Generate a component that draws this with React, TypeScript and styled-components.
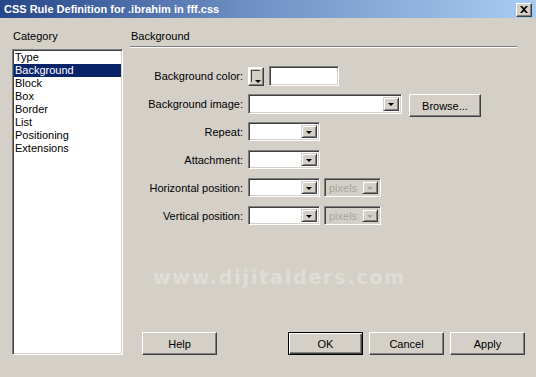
import styled, { createGlobalStyle } from "styled-components";

const GlobalStyle = createGlobalStyle`
  body {
    margin: 0;
    background: #d4d0c8;
    font-family: "Liberation Sans", Arial, sans-serif;
    font-size: 11px;
    color: #000;
  }
`;

const Window = styled.div`
  width: 536px;
  height: 377px;
  display: flex;
  flex-direction: column;
  background: #d4d0c8;
  overflow: hidden;
`;

const TitleBar = styled.div`
  height: 18px;
  display: flex;
  align-items: center;
  justify-content: space-between;
  padding: 0 4px 0 4px;
  background: linear-gradient(to right, #26468a 0%, #6d8ec2 45%, #a8ccf2 100%);
`;

const Title = styled.span`
  color: #fff;
  font-weight: bold;
  font-size: 11px;
`;

const CloseButton = styled.div`
  width: 14px;
  height: 12px;
  display: flex;
  align-items: center;
  justify-content: center;
  background: #d4d0c8;
  border: 1px solid;
  border-color: #fff #404040 #404040 #fff;
  box-shadow: inset -1px -1px #808080;
  margin-top: 1px;
`;

const Main = styled.div`
  flex: 1;
  display: flex;
  gap: 7px;
  padding: 12px 11px 22px 12px;
`;

const Sidebar = styled.div`
  width: 111px;
  display: flex;
  flex-direction: column;
`;

const Caption = styled.div`
  height: 13px;
  line-height: 13px;
  padding-left: 1px;
`;

const ListBox = styled.div`
  flex: 1;
  margin-top: 6px;
  background: #fff;
  border: 1px solid;
  border-color: #808080 #fff #fff #808080;
  box-shadow: inset 1px 1px #404040, inset -1px -1px #d4d0c8;
  padding: 1px;
`;

const ListItem = styled.div<{ $selected?: boolean }>`
  height: 13px;
  line-height: 13px;
  padding-left: 1px;
  background: ${(p) => (p.$selected ? "#0a246a" : "transparent")};
  color: ${(p) => (p.$selected ? "#fff" : "#000")};
`;

const Panel = styled.div`
  flex: 1;
  display: flex;
  flex-direction: column;
`;

const Rule = styled.div`
  margin: 3px 8px 0 0;
  height: 0;
  border-top: 1px solid #808080;
  border-bottom: 1px solid #fff;
`;

const Form = styled.div`
  margin-top: 18px;
  display: grid;
  grid-template-columns: 113px auto;
  grid-auto-rows: 20px;
  column-gap: 5px;
  row-gap: 8px;
`;

const Label = styled.div`
  text-align: right;
  align-self: center;
  white-space: nowrap;
`;

const Controls = styled.div<{ $gap?: number }>`
  display: flex;
  align-items: flex-start;
  gap: ${(p) => p.$gap ?? 4}px;
`;

const sunken = `
  border: 1px solid;
  border-color: #808080 #fff #fff #808080;
  box-shadow: inset 1px 1px #404040, inset -1px -1px #d4d0c8;
`;

const TextInput = styled.div<{ $width: number }>`
  box-sizing: border-box;
  width: ${(p) => p.$width}px;
  height: 20px;
  background: #fff;
  ${sunken}
`;

const Swatch = styled.div`
  position: relative;
  box-sizing: border-box;
  width: 16px;
  height: 19px;
  margin-top: 1px;
  background: #d4d0c8;
  border: 1px solid;
  border-color: #fff #404040 #404040 #fff;
  box-shadow: inset -1px -1px #808080, inset 1px 1px #fff;
  &::before {
    content: "";
    position: absolute;
    left: 2px;
    top: 2px;
    width: 8px;
    height: 11px;
    border-left: 1px solid #404040;
    border-top: 1px solid #404040;
  }
  &::after {
    content: "";
    position: absolute;
    right: 2px;
    bottom: 2px;
    border-left: 3px solid transparent;
    border-right: 3px solid transparent;
    border-top: 3px solid #000;
  }
`;

const SelectBox = styled.div<{ $width: number; $height?: number; $disabled?: boolean }>`
  box-sizing: border-box;
  width: ${(p) => p.$width}px;
  height: ${(p) => p.$height ?? 19}px;
  display: flex;
  align-items: stretch;
  padding: 2px;
  background: ${(p) => (p.$disabled ? "#d4d0c8" : "#fff")};
  color: #a8a49c;
  ${sunken}
`;

const SelectValue = styled.div`
  flex: 1;
  line-height: 15px;
  padding-left: 2px;
  overflow: hidden;
`;

const DropButton = styled.div<{ $disabled?: boolean }>`
  box-sizing: border-box;
  width: 16px;
  display: flex;
  align-items: center;
  justify-content: center;
  background: #d4d0c8;
  border: 1px solid;
  border-color: #d4d0c8 #404040 #404040 #d4d0c8;
  box-shadow: inset 1px 1px #fff, inset -1px -1px #808080;
  &::after {
    content: "";
    border-left: 3px solid transparent;
    border-right: 3px solid transparent;
    border-top: 3px solid ${(p) => (p.$disabled ? "#a8a49c" : "#000")};
    margin-top: 1px;
  }
`;

const Button = styled.div<{ $default?: boolean; $width?: number }>`
  box-sizing: border-box;
  width: ${(p) => p.$width ?? 75}px;
  height: 23px;
  display: flex;
  align-items: center;
  justify-content: center;
  background: #d4d0c8;
  border: 1px solid;
  border-color: ${(p) => (p.$default ? "#000" : "#fff #404040 #404040 #fff")};
  box-shadow: ${(p) =>
    p.$default
      ? "inset 1px 1px #fff, inset -1px -1px #404040, inset -2px -2px #808080"
      : "inset -1px -1px #808080, inset 1px 1px #d4d0c8"};
`;

const Watermark = styled.div`
  margin: 42px 0 0 23px;
  font-family: "DejaVu Sans", Verdana, sans-serif;
  font-weight: bold;
  font-size: 19px;
  letter-spacing: 1.8px;
  color: #e0ddd7;
  line-height: 18px;
  white-space: nowrap;
`;

const ButtonRow = styled.div`
  margin-top: auto;
  display: flex;
  align-items: center;
  padding-left: 12px;
`;

const ButtonGroup = styled.div`
  margin-left: auto;
  display: flex;
  gap: 6px;
`;

function Select({
  width,
  height,
  value,
  disabled,
}: {
  width: number;
  height?: number;
  value?: string;
  disabled?: boolean;
}) {
  return (
    <SelectBox $width={width} $height={height} $disabled={disabled}>
      <SelectValue>{value}</SelectValue>
      <DropButton $disabled={disabled} />
    </SelectBox>
  );
}

const categories = [
  "Type",
  "Background",
  "Block",
  "Box",
  "Border",
  "List",
  "Positioning",
  "Extensions",
];

export default function App() {
  return (
    <>
      <GlobalStyle />
      <Window>
        <TitleBar>
          <Title>CSS Rule Definition for .ibrahim in fff.css</Title>
          <CloseButton>
            <svg width="8" height="7" viewBox="0 0 8 7">
              <path d="M0 0h2l2 2 2-2h2L5 3.5 8 7H6L4 5 2 7H0l3-3.5z" fill="#000" />
            </svg>
          </CloseButton>
        </TitleBar>
        <Main>
          <Sidebar>
            <Caption>Category</Caption>
            <ListBox>
              {categories.map((c) => (
                <ListItem key={c} $selected={c === "Background"}>
                  {c}
                </ListItem>
              ))}
            </ListBox>
          </Sidebar>
          <Panel>
            <Caption>Background</Caption>
            <Rule />
            <Form>
              <Label>Background color:</Label>
              <Controls $gap={5}>
                <Swatch />
                <TextInput $width={70} />
              </Controls>

              <Label>Background image:</Label>
              <Controls $gap={7}>
                <Select width={154} height={20} />
                <Button $width={72}>Browse...</Button>
              </Controls>

              <Label>Repeat:</Label>
              <Controls>
                <Select width={72} />
              </Controls>

              <Label>Attachment:</Label>
              <Controls>
                <Select width={72} />
              </Controls>

              <Label>Horizontal position:</Label>
              <Controls>
                <Select width={72} />
                <Select width={57} value="pixels" disabled />
              </Controls>

              <Label>Vertical position:</Label>
              <Controls>
                <Select width={72} />
                <Select width={57} value="pixels" disabled />
              </Controls>
            </Form>
            <Watermark>www.dijitalders.com</Watermark>
            <ButtonRow>
              <Button>Help</Button>
              <ButtonGroup>
                <Button $default>OK</Button>
                <Button>Cancel</Button>
                <Button>Apply</Button>
              </ButtonGroup>
            </ButtonRow>
          </Panel>
        </Main>
      </Window>
    </>
  );
}
